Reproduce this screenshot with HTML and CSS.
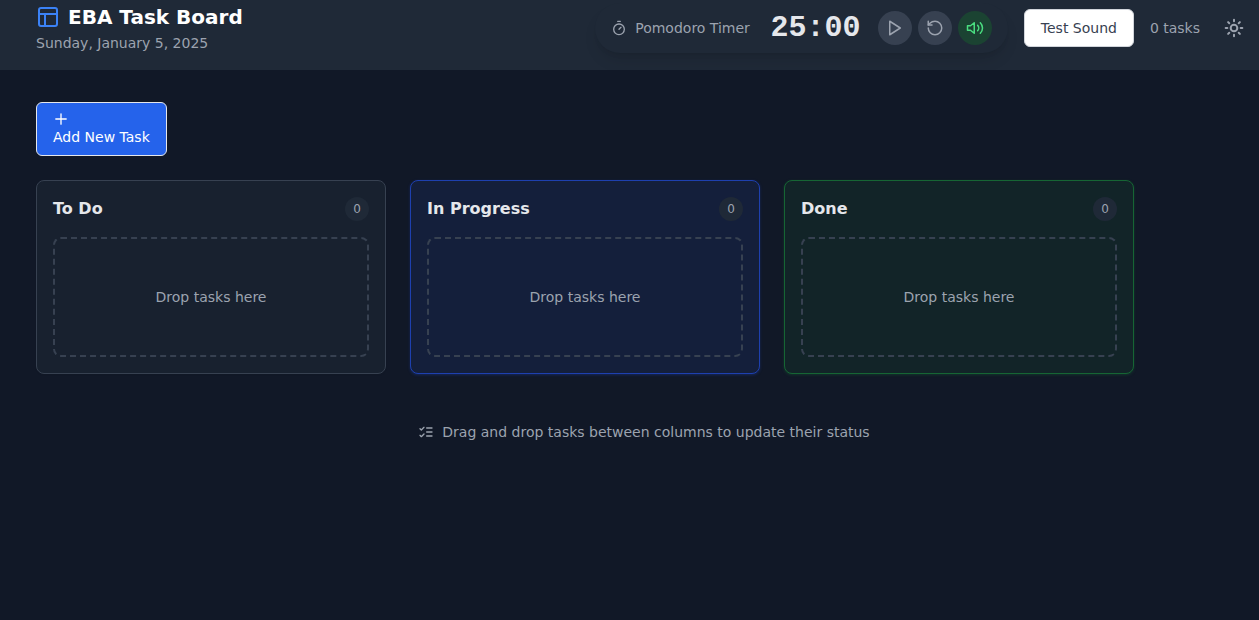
FILE: index.html
```html
<!DOCTYPE html>
<html lang="en">
<head>
<meta charset="utf-8">
<title>EBA Task Board</title>
<link rel="stylesheet" href="styles.css">
</head>
<body>
<header class="header">
  <div class="brand">
    <h1 class="title">
      <svg class="icon logo" width="24" height="24" viewBox="0 0 24 24"><rect x="3" y="3" width="18" height="18" rx="2"/><path d="M3 9h18M9 21V9"/></svg>
      EBA Task Board
    </h1>
    <p class="date">Sunday, January 5, 2025</p>
  </div>
  <div class="tools">
    <div class="timer">
      <svg class="icon" width="16" height="16" viewBox="0 0 24 24"><path d="M10 2h4M12 14l3-3"/><circle cx="12" cy="14" r="8"/></svg>
      <span class="timer-label">Pomodoro Timer</span>
      <span class="clock">25:00</span>
      <div class="controls">
        <button class="round" aria-label="Start"><svg class="icon" width="18" height="18" viewBox="0 0 24 24"><path d="M5 3l14 9-14 9z"/></svg></button>
        <button class="round" aria-label="Reset"><svg class="icon" width="18" height="18" viewBox="0 0 24 24"><path d="M3 12a9 9 0 1 0 9-9 9.75 9.75 0 0 0-6.74 2.74L3 8"/><path d="M3 3v5h5"/></svg></button>
        <button class="round sound" aria-label="Sound"><svg class="icon" width="18" height="18" viewBox="0 0 24 24"><path d="M11 5L6 9H2v6h4l5 4z"/><path d="M15.54 8.46a5 5 0 0 1 0 7.07M19.07 4.93a10 10 0 0 1 0 14.14"/></svg></button>
      </div>
    </div>
    <button class="test">Test Sound</button>
    <span class="count">0 tasks</span>
    <button class="theme" aria-label="Theme"><svg class="icon" width="20" height="20" viewBox="0 0 24 24"><circle cx="12" cy="12" r="4"/><path d="M12 2v2M12 20v2M4.93 4.93l1.41 1.41M17.66 17.66l1.41 1.41M2 12h2M20 12h2M6.34 17.66l-1.41 1.41M19.07 4.93l-1.41 1.41"/></svg></button>
  </div>
</header>
<main class="main">
  <button class="add">
    <svg class="icon" width="16" height="16" viewBox="0 0 24 24"><path d="M4.2 12h15.6M12 4.2v15.6"/></svg>
    <span>Add New Task</span>
  </button>
  <div class="board">
    <section class="column todo">
      <div class="column-head"><h2>To Do</h2><span class="badge">0</span></div>
      <div class="drop">Drop tasks here</div>
    </section>
    <section class="column progress">
      <div class="column-head"><h2>In Progress</h2><span class="badge">0</span></div>
      <div class="drop">Drop tasks here</div>
    </section>
    <section class="column done">
      <div class="column-head"><h2>Done</h2><span class="badge">0</span></div>
      <div class="drop">Drop tasks here</div>
    </section>
  </div>
  <p class="hint">
    <svg class="icon" width="16" height="16" viewBox="0 0 24 24"><path d="M3 17l2 2 4-4M3 7l2 2 4-4M13 6h8M13 12h8M13 18h8"/></svg>
    Drag and drop tasks between columns to update their status
  </p>
</main>
</body>
</html>
```
FILE: styles.css
```css
* { box-sizing: border-box; margin: 0; }
body { background: #111827; color: #9ca3af; font: 14px/20px "DejaVu Sans", sans-serif; height: 620px; overflow: hidden; }
button { font: inherit; color: inherit; border: 0; padding: 0; background: none; }
.icon { display: block; flex: none; fill: none; stroke: currentColor; stroke-width: 2; stroke-linecap: round; stroke-linejoin: round; }
.header { display: flex; justify-content: space-between; align-items: flex-start; height: 70px; background: #1f2937; padding: 3px 15px 0 36px; overflow: hidden; }
.title { display: flex; align-items: center; gap: 8px; color: #fff; font-size: 20px; line-height: 28px; font-weight: 700; white-space: nowrap; }
.logo { color: #3b82f6; }
.date { margin-top: 2px; }
.tools { display: flex; align-items: center; }
.timer { display: flex; align-items: center; height: 50px; padding: 0 16px; border-radius: 25px; background: #1f2937; box-shadow: 0 10px 15px -3px rgba(0,0,0,.1), 0 4px 6px -4px rgba(0,0,0,.1); }
.timer-label { margin-left: 8px; white-space: nowrap; }
.clock { margin-left: 20.5px; color: #e5e7eb; font: 700 30px/36px "Liberation Mono", monospace; width: 90px; }
.controls { display: flex; gap: 6px; margin-left: 17.5px; }
.round { display: flex; align-items: center; justify-content: center; width: 34px; height: 34px; border-radius: 50%; background: #374151; }
.sound { background: #1b4332; color: #4ade80; }
.test { width: 110px; height: 38px; margin-left: 16px; border: 1px solid #d1d5db; border-radius: 6px; background: #fff; color: #374151; }
.count { margin-left: 16px; white-space: nowrap; }
.theme { margin-left: 24px; }
.theme .icon { stroke-width: 2.4; }
.main { padding: 32px 7px 0 36px; }
.add { display: block; width: 131px; height: 54px; padding: 0 16px; border: 1px solid #e5e7eb; border-radius: 6px; background: #2563eb; color: #fff; text-align: left; line-height: 20px; white-space: nowrap; }
.add span { display: block; }
.board { display: grid; grid-template-columns: repeat(3, 350px); gap: 24px; margin-top: 24px; }
.column { height: 194px; padding: 16px; border: 1px solid #374151; border-radius: 8px; background: #18212f; box-shadow: 0 1px 2px rgba(0,0,0,.05); }
.progress { background: #141f3b; border-color: #1e40af; box-shadow: 0 1px 3px rgba(30,64,175,.4); }
.done { background: #122428; border-color: #166534; box-shadow: 0 1px 3px rgba(22,101,52,.4); }
.column-head { display: flex; align-items: center; justify-content: space-between; height: 24px; }
.column h2 { color: #e5e7eb; font-size: 16px; line-height: 24px; font-weight: 700; }
.badge { width: 24px; height: 24px; border-radius: 50%; background: #1f2937; text-align: center; font-size: 12px; line-height: 24px; }
.drop { display: flex; align-items: center; justify-content: center; height: 120px; margin-top: 16px; border: 2px dashed #374151; border-radius: 8px; }
.hint { display: flex; align-items: center; justify-content: center; gap: 8px; margin-top: 48px; }
```
